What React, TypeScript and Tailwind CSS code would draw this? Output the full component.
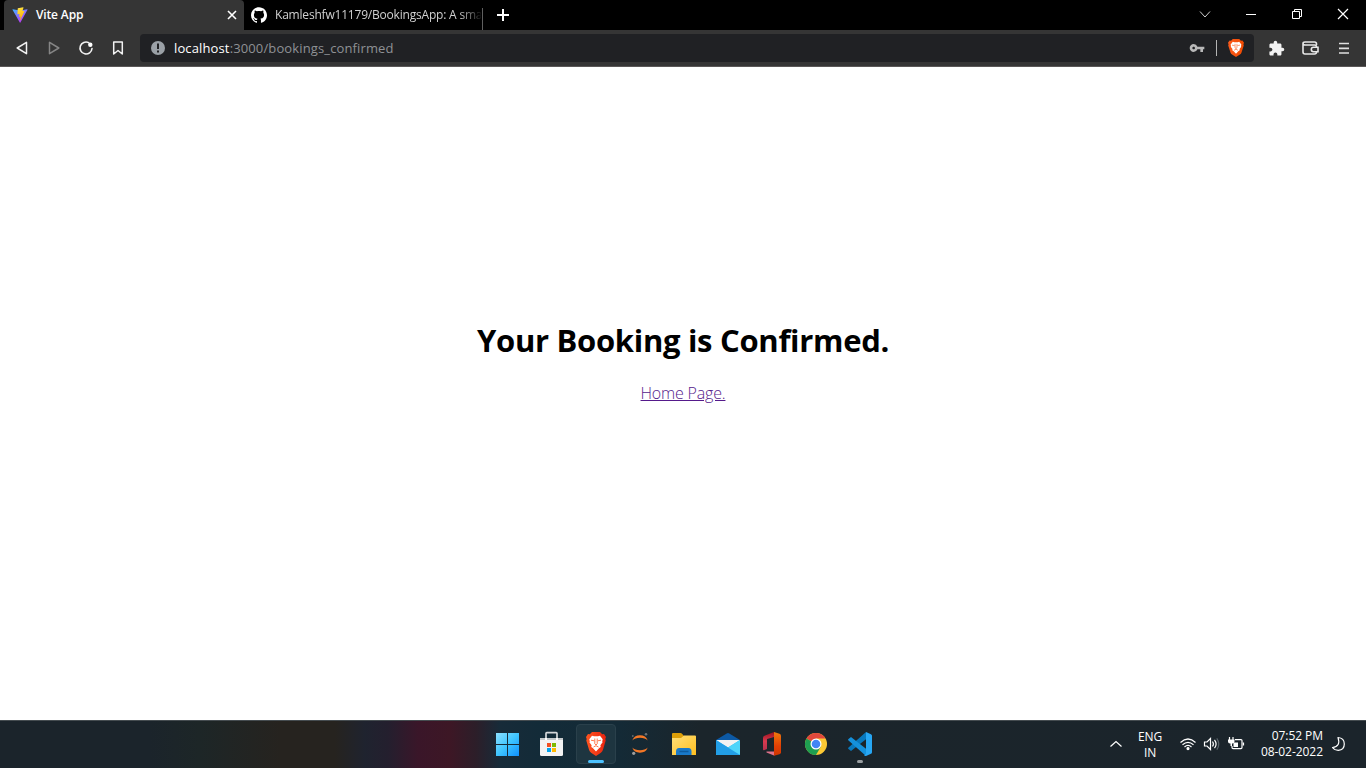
import React from "react";
import { SiGithub } from "react-icons/si";
import { MdExtension, MdVpnKey } from "react-icons/md";

const uiFont = "font-['Open_Sans','Noto_Sans',sans-serif]";

function ViteLogo() {
  return (
    <svg width="16" height="16" viewBox="0 0 32 32" className="shrink-0">
      <defs>
        <linearGradient id="viteA" x1="0" y1="0" x2="0.6" y2="1">
          <stop stopColor="#41b4ff" />
          <stop offset="1" stopColor="#bd34fe" />
        </linearGradient>
        <linearGradient id="viteB" x1="0.4" y1="0" x2="0.6" y2="1">
          <stop stopColor="#ffea83" />
          <stop offset="0.1" stopColor="#ffdd35" />
          <stop offset="1" stopColor="#ffa800" />
        </linearGradient>
      </defs>
      <path d="M31 5.5 16.8 31q-.6.9-1.2 0L1 5.5q-.4-1 .7-1L16 7l14.300-2.500q1.100 0 .7 1Z" fill="url(#viteA)" />
      <path d="m22.500.5-10.500 2q-.5.1-.5.600l-.7 11q0 .7.700.6l2.900-.7q.7-.1.6.6l-.9 4.300q-.1.700.6.600l1.800-.5q.7-.1.600.6l-1.400 6.600q-.1 1.200.8.200L25 8.300q.3-.7-.5-.7l-3 .6q-.7 0-.5-.7l2-6.200q.2-.8-.5-.8Z" fill="url(#viteB)" />
    </svg>
  );
}

function TabStrip() {
  return (
    <div className="flex h-[30px] items-stretch bg-black pl-1 text-white">
      <div className="flex w-60 items-center rounded-t-[4px] bg-[#353535] pr-[6px] pl-2">
        <ViteLogo />
        <span className="ml-2 text-[12px] leading-none font-semibold tracking-[-0.15px]">Vite App</span>
        <svg className="ml-auto" width="12" height="12" viewBox="0 0 12 12">
          <path d="m2 2 8 8m0-8-8 8" stroke="#fff" strokeWidth="1.6" />
        </svg>
      </div>
      <div className="flex w-[239px] items-center pl-[7px]">
        <SiGithub size={16} className="shrink-0" />
        <div className="ml-2 w-[206px] [mask-image:linear-gradient(to_right,#000_184px,transparent_208px)]">
          <span className="block text-[12px] leading-[18px] tracking-[-0.2px] whitespace-nowrap text-[#d0d0d0]">
            Kamleshfw11179/BookingsApp: A sma
          </span>
        </div>
        <div className="mt-2 ml-auto h-[22px] w-px bg-[#5f5f5f]" />
      </div>
      <svg className="ml-[14px] self-center" width="12" height="12" viewBox="0 0 12 12">
        <path d="M6 0v12M0 6h12" stroke="#fff" strokeWidth="2" />
      </svg>
      <div className="ml-auto flex items-center">
        <svg width="46" height="30" viewBox="0 0 46 30" fill="none" stroke="#d0d0d0">
          <path d="m18 11.500 5 5.500 5-5.500" />
        </svg>
        <svg width="46" height="30" viewBox="0 0 46 30">
          <path d="M18 14.500h10" stroke="#fff" />
        </svg>
        <svg width="46" height="30" viewBox="0 0 46 30" fill="none" stroke="#fff">
          <path d="M18.500 11.500h7v7h-7zM20.500 11.500v-2h7v7h-2" />
        </svg>
        <svg width="46" height="30" viewBox="0 0 46 30">
          <path d="m18 9 10 10m0-10L18 19" stroke="#fff" strokeWidth="1.200" />
        </svg>
      </div>
    </div>
  );
}

function Toolbar() {
  return (
    <div className="flex h-[37px] items-center border-b border-[#5a5757] bg-[#353535]">
      <svg width="140" height="36" viewBox="0 30 140 36" fill="none" strokeLinejoin="round" strokeLinecap="round">
        <path d="M26.500 42.300v11.400L17.200 48Z" stroke="#f2f2f2" strokeWidth="1.500" />
        <path d="M49.500 42.300v11.400l9.300-5.700Z" stroke="#858585" strokeWidth="1.500" />
        <path d="M88.700 42.600A6 6 0 1 0 92 48.500" stroke="#f2f2f2" strokeWidth="1.600" />
        <circle cx="90.300" cy="44.700" r="2.200" fill="#fff" />
        <path d="M113.700 42h8.600v12l-4.300-3.500-4.300 3.500Z" stroke="#f2f2f2" strokeWidth="1.500" />
      </svg>
      <div className="flex h-7 w-[1114px] items-center rounded-[4px] bg-[#202124] pl-[11px]">
        <svg width="14" height="14" viewBox="0 0 14 14" className="shrink-0">
          <circle cx="7" cy="7" r="7" fill="#9aa0a6" />
          <path d="M7 2.500v5.500M7 9.500v2" stroke="#202124" strokeWidth="2" />
        </svg>
        <span className="ml-[9px] text-[13px] leading-none tracking-[0.13px] whitespace-nowrap text-[#8f9195]">
          <span className="text-white">localhost</span>:3000/bookings_confirmed
        </span>
        <MdVpnKey size={16} className="mr-[11px] ml-auto shrink-0 text-[#b8b8b8]" />
        <div className="mr-[11px] h-4 w-px bg-[#b4b4b4]" />
        <BraveShield className="mr-[10px] h-[18px] w-4" from="#fb5a1b" to="#f04a00" id="bar" />
      </div>
      <MdExtension size={17} className="ml-[14px] shrink-0 text-[#f2f2f2]" />
      <svg className="ml-4" width="18" height="16" viewBox="0 0 18 16" fill="none" stroke="#e8e8e8" strokeWidth="1.600">
        <path d="M15.500 5V4q0-2-2-2H4Q2 2 2 3.500M2 3.500v8.500q0 2 2 2h9.500q2 0 2-2M2 3.500Q2 5 4 5h9.500q2 0 2 2" />
        <path d="M17 7.300h-4.500a2.200 2.200 0 0 0 0 4.400H17z" />
      </svg>
      <svg className="ml-[19px]" width="12" height="14" viewBox="0 0 12 14">
        <path d="M1 2.500h10M1 7.300h10M1 12h10" stroke="#e0e0e0" strokeWidth="1.700" />
      </svg>
    </div>
  );
}

function BraveShield({ className, from, to, id }: { className: string; from: string; to: string; id: string }) {
  return (
    <svg viewBox="0 0 20 24" preserveAspectRatio="none" className={`shrink-0 ${className}`}>
      <defs>
        <linearGradient id={id} x1="0" x2="1">
          <stop stopColor={from} />
          <stop offset="1" stopColor={to} />
        </linearGradient>
      </defs>
      <path d="M6 0h8l2.200 2.200 1.800-.2 2 3-.7 2 .4 1.500-2.800 9.500q-.6 1.800-2 2.800L10 24l-4.900-3.200q-1.400-1-2-2.800L.3 8.500.700 7 0 5l2-3 1.800.2Z" fill={`url(#${id})`} />
      <path d="M6 3.800 8 4.300h4l2-.5 2.700 3.400-.5 2.300.4.800-2.200 3 .3 1.800-1.500 1L10 19.500l-3.200-3.400-1.500-1 .3-1.800-2.200-3 .4-.8-.5-2.300Z" fill="#fff" />
      <path d="m5 8.200 3.200.6M15 8.200l-3.200.6M8.800 6.500v5.300l1.200 1.200 1.200-1.200V6.500M7.500 15 10 13.700l2.500 1.300" fill="none" stroke={from} strokeWidth="0.8" />
    </svg>
  );
}

function AppSlot({ children }: { children: React.ReactNode }) {
  return (
    <svg width="40" height="48" viewBox="0 0 40 48" className="shrink-0">
      {children}
    </svg>
  );
}

function TaskIcons() {
  return (
    <div className="flex gap-1">
      <AppSlot>
        <defs>
          <linearGradient id="win" x1="8" y1="13" x2="31" y2="36" gradientUnits="userSpaceOnUse">
            <stop stopColor="#8be0ff" />
            <stop offset="0.500" stopColor="#3fc5ff" />
            <stop offset="1" stopColor="#0f91ff" />
          </linearGradient>
        </defs>
        <path d="M8 13h11v11H8zM20 13h11v11H20zM8 25h11v11H8zM20 25h11v11H20z" fill="url(#win)" />
      </AppSlot>
      <AppSlot>
        <path d="M14 19v-5.500q0-.8.800-.8h9.400q.8 0 .8.800V19" fill="none" stroke="#d5d8da" strokeWidth="1.700" />
        <path d="M8 18h23v16.500q0 1.500-1.500 1.500h-20Q8 36 8 34.500Z" fill="#f3f3f3" />
        <path d="M8 18h23v2H8z" fill="#c5c9cb" />
        <path d="M14 18v2M25 18v2" stroke="#fff" strokeWidth="2" />
        <path d="M15 23h4v4h-4z" fill="#f25022" />
        <path d="M20 23h4v4h-4z" fill="#7fba00" />
        <path d="M15 28h4v4h-4z" fill="#00a4ef" />
        <path d="M20 28h4v4h-4z" fill="#ffb900" />
      </AppSlot>
      <div className="relative mt-1 flex h-10 w-10 justify-center rounded-[4px] border border-[#2a404b] bg-[#1e3540]">
        <BraveShield className="mt-[7px] h-6 w-5" from="#ff5520" to="#e8230f" id="dock" />
        <div className="absolute bottom-0 left-[11px] h-[3px] w-4 rounded-full bg-[#4cc2ff]" />
      </div>
      <AppSlot>
        <path d="M12.300 20.500Q14 15.300 20 15.300t7.700 5.200Q25 17.800 20 17.800t-7.700 2.700ZM12.300 27.500Q14 32.700 20 32.700t7.700-5.200Q25 30.200 20 30.200t-7.700-2.700Z" fill="#f37726" />
        <circle cx="26" cy="14.300" r="1.300" fill="#6b7175" />
        <circle cx="13.700" cy="33.300" r="1.600" fill="#9e9e9e" />
        <circle cx="12.800" cy="16" r=".9" fill="#616b70" />
      </AppSlot>
      <AppSlot>
        <defs>
          <linearGradient id="folder" x1="0" y1="0" x2="1" y2="1">
            <stop stopColor="#ffe07a" />
            <stop offset="1" stopColor="#ffbe1f" />
          </linearGradient>
        </defs>
        <path d="M8 14q0-1 1-1h7.500q1 0 1.500.7l2 2.300v4H8z" fill="#dd9f08" />
        <path d="M8 18h9l3-2.500h11q1 0 1 1V35H8z" fill="url(#folder)" />
        <path d="M12 35v-3.500q0-3.500 3-3.500h9.500q3 0 3 3.500V35z" fill="#1979c9" />
        <path d="M15.500 31.500h9" stroke="#0c5a9e" strokeWidth="1.500" />
      </AppSlot>
      <AppSlot>
        <path d="M8 20 18.700 13.500q1.300-.8 2.600 0L32 20v3H8z" fill="#0c59a4" />
        <path d="M9 20h22v7L20 31 9 27z" fill="#f2f2f2" />
        <path d="M8 20v15h24z" fill="#28b5ef" />
        <path d="M32 20v15H8z" fill="#2bb2ee" />
        <path d="M32 20 8 35h23q1 0 1-1z" fill="#4fd5fa" />
        <path d="m8 20 12 7.500L32 35H9q-1 0-1-1z" fill="#229ee6" />
      </AppSlot>
      <AppSlot>
        <defs>
          <linearGradient id="office" x1="0" y1="0" x2="0" y2="1">
            <stop stopColor="#99101c" />
            <stop offset="0.500" stopColor="#d93a50" />
            <stop offset="1" stopColor="#b5314d" />
          </linearGradient>
          <linearGradient id="officeR" x1="0" y1="0" x2="0" y2="1">
            <stop stopColor="#f17a0c" />
            <stop offset="0.600" stopColor="#e03f05" />
            <stop offset="1" stopColor="#cf3500" />
          </linearGradient>
        </defs>
        <path d="m22 12-9.500 3.700Q11 16.300 11 18v11.500q0 1 1 .8l3-1.300V19l7-2z" fill="url(#office)" />
        <path d="M14.500 31.500H23V35l-1 .5-7.500-3z" fill="#e0728b" />
        <path d="m22 12 5.500 1.700Q29 14.200 29 15.800v16.400q0 1.500-1.500 2L22 35.800z" fill="url(#officeR)" />
      </AppSlot>
      <AppSlot>
        <circle cx="20" cy="24" r="11" fill="#fcc934" />
        <path d="M20 24 10.470 18.500A11 11 0 0 1 29.530 18.500H20Z" fill="#e0483c" />
        <path d="M10.470 18.500A11 11 0 0 0 20 35l4.760-8.250L20 24Z" fill="#1e9e50" />
        <circle cx="20" cy="24" r="5.500" fill="#fff" />
        <circle cx="20" cy="24" r="4.300" fill="#4285f4" />
      </AppSlot>
      <AppSlot>
        <path d="M26 12v7.200L11 31l-2.500-2q-1-.7 0-1.500Z" fill="#0878bd" />
        <path d="M26 36v-7.200L11 17l-2.500 2q-1 .7 0 1.500Z" fill="#1591dc" />
        <path d="m26 12 5 2.200q1 .5 1 1.500v16.600q0 1-1 1.500L26 36q-1 .2-2-.8L26 34Z" fill="#27a7f4" />
        <rect x="17" y="40" width="6" height="3" rx="1.500" fill="#9a9fa2" />
      </AppSlot>
    </div>
  );
}

function SystemTray() {
  return (
    <div className="ml-auto flex items-center text-[12px] leading-4 text-white">
      <svg width="14" height="10" viewBox="0 0 14 10" fill="none" stroke="#fff" strokeWidth="1.200">
        <path d="m1.500 7.500 5.500-5 5.500 5" />
      </svg>
      <div className="ml-[14px] w-[26px] pt-[2px] text-center text-[12px] tracking-[-0.15px]">
        ENG
        <br />
        IN
      </div>
      <svg className="ml-4" width="66" height="24" viewBox="1179 732 66 24" fill="none" stroke="#fff" strokeWidth="1.200">
        <path d="M1180.500 742.500q7.500-7 15 0M1182.500 744.800q5.500-5 11 0M1184.500 747q3.500-3.200 7 0" />
        <circle cx="1188" cy="748.600" r="1" fill="#fff" />
        <path d="M1204.500 742h2.500l3.500-3.500v11l-3.500-3.500h-2.500z" />
        <path d="M1212.500 741.500q1.800 2.500 0 5M1214.500 739.800q3.200 4.200 0 8.400" />
        <path d="M1216.800 738.300q4 5.700 0 11.400" stroke="#59636a" />
        <path d="M1235 739.600h6q1 0 1 1v7q0 1-1 1h-8q-1 0-1-1V746M1243.500 742.500v3" />
        <path d="M1233.500 742.500h4.500v4.500h-4.500z" fill="#fff" stroke="none" />
        <path d="M1229.500 737v3M1233 737v3" />
        <path d="M1228 739.500h6.500v2q0 2-2 2h-2.500q-2 0-2-2zM1230.500 743h1.500v3h-1.500z" fill="#fff" stroke="none" />
      </svg>
      <div className="ml-[14px] w-[64px] text-right text-[12px] tracking-[-0.05px] whitespace-nowrap">
        07:52 PM
        <br />
        08-02-2022
      </div>
      <svg className="mr-[20px] ml-[8px]" width="15" height="16" viewBox="0 0 14 16" fill="none" stroke="#fff" strokeWidth="1.200" strokeLinejoin="round">
        <path d="M6.500 1.500Q12.800 2 12.800 8t-6 6.300Q3 14.300 1 11.500 9.500 10.500 6.500 1.500Z" />
      </svg>
    </div>
  );
}

export default function App() {
  return (
    <div className={`flex h-screen w-full flex-col overflow-hidden bg-white ${uiFont}`}>
      <TabStrip />
      <Toolbar />
      <main className="flex flex-1 flex-col items-center pt-[252px] text-black">
        <h1 className="text-[31px] leading-[43px] font-bold tracking-[-0.3px] whitespace-nowrap">Your Booking is Confirmed.</h1>
        <a href="#home" className="mt-5 text-[16px] leading-[22px] font-light tracking-[-0.18px] whitespace-nowrap text-[#551a8b] underline underline-offset-1">
          Home Page.
        </a>
      </main>
      <footer className="flex h-12 border-t border-[#454c50] bg-[linear-gradient(90deg,#1b242b_0px,#1b242b_150px,#1d2627_200px,#26231f_280px,#26231f_335px,#1f232f_365px,#241f2e_388px,#3a1629_418px,#3d1725_450px,#2c1e29_476px,#172b39_500px,#132b38_540px,#142a36_620px,#1b252b_700px,#1b242b_1366px)] pl-[488px]">
        <div className="-mt-px flex flex-1">
          <TaskIcons />
          <SystemTray />
        </div>
      </footer>
    </div>
  );
}
